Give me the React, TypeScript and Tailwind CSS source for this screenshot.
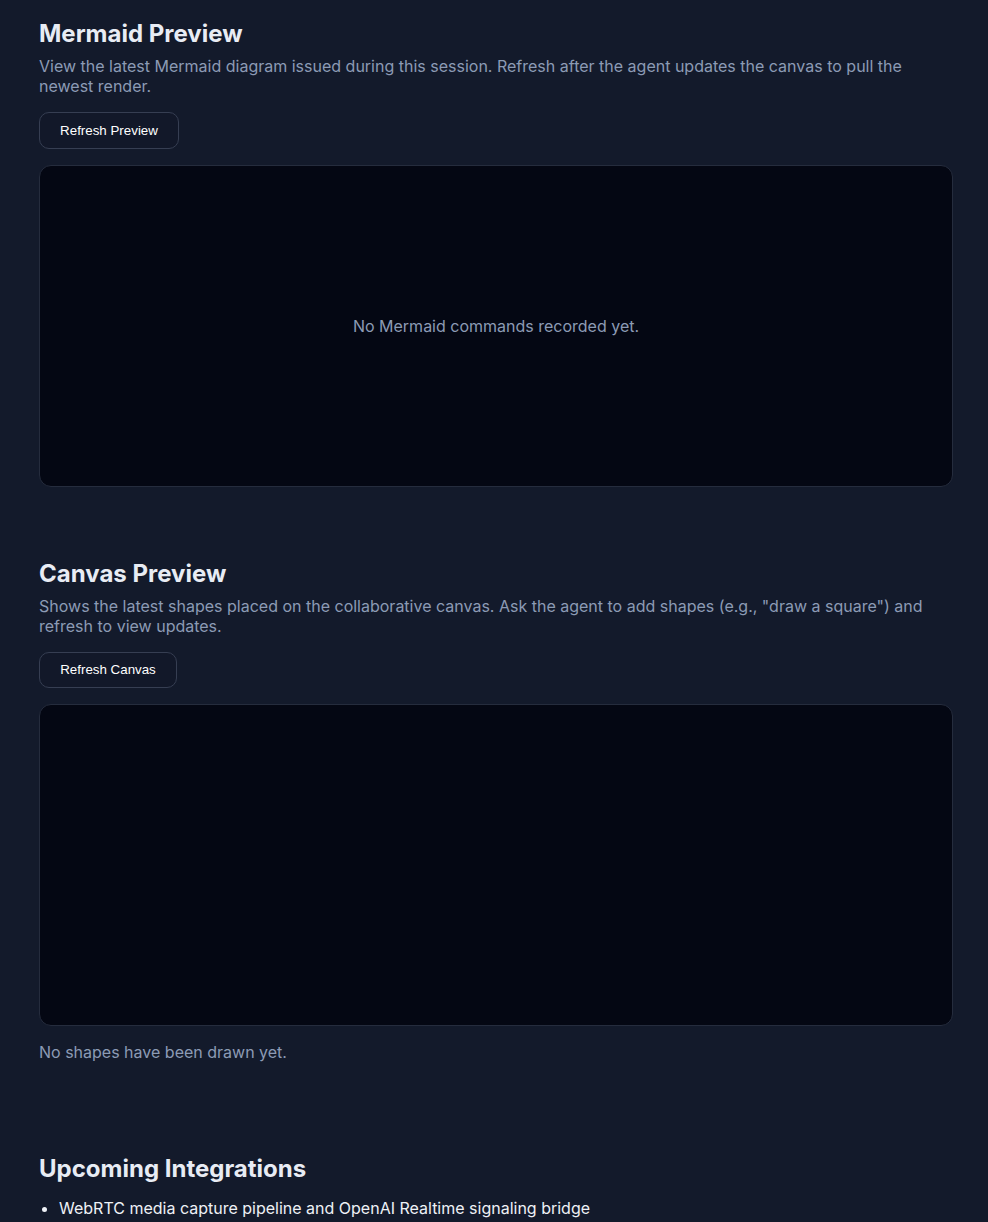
export default function App() {
  return (
    <div
      className="min-h-screen bg-[#131a2b] pl-[39px] pr-[35px] pt-[18px] pb-10"
      style={{ fontFamily: "Inter, 'Noto Sans', sans-serif" }}
    >
      <section>
        <h2 className="text-2xl leading-8 font-bold text-[#e8ecf4]">Mermaid Preview</h2>
        <p className="mt-[6px] text-base leading-5 text-[#8c9bb5]">
          View the latest Mermaid diagram issued during this session. Refresh after the agent updates the canvas to pull the
          newest render.
        </p>
        <button
          className="mt-4 h-[37px] w-[140px] rounded-[10px] border border-[#363e52] bg-[#121829] text-[13.33px] text-white"
          style={{ fontFamily: "'Liberation Sans', Arial, sans-serif" }}
        >
          Refresh Preview
        </button>
        <div className="mt-4 flex h-[322px] items-center justify-center rounded-xl border border-[#252c3d] bg-[#040713]">
          <span className="text-base text-[#8c9bb5]">No Mermaid commands recorded yet.</span>
        </div>
      </section>

      <section className="mt-[71px]">
        <h2 className="text-2xl leading-8 font-bold text-[#e8ecf4]">Canvas Preview</h2>
        <p className="mt-[6px] text-base leading-5 text-[#8c9bb5]">
          Shows the latest shapes placed on the collaborative canvas. Ask the agent to add shapes (e.g., "draw a square") and
          refresh to view updates.
        </p>
        <button
          className="mt-4 h-[36px] w-[138px] rounded-[10px] border border-[#363e52] bg-[#121829] text-[13.33px] text-white"
          style={{ fontFamily: "'Liberation Sans', Arial, sans-serif" }}
        >
          Refresh Canvas
        </button>
        <div className="mt-4 h-[322px] rounded-xl border border-[#252c3d] bg-[#040713]" />
        <p className="mt-4 text-base leading-5 text-[#8c9bb5]">No shapes have been drawn yet.</p>
      </section>

      <section className="mt-[91px]">
        <h2 className="text-2xl leading-8 font-bold text-[#e8ecf4]">Upcoming Integrations</h2>
        <ul className="mt-[11px] list-disc pl-5 text-base leading-6 text-[#eef1f6]">
          <li>WebRTC media capture pipeline and OpenAI Realtime signaling bridge</li>
        </ul>
      </section>
    </div>
  );
}
